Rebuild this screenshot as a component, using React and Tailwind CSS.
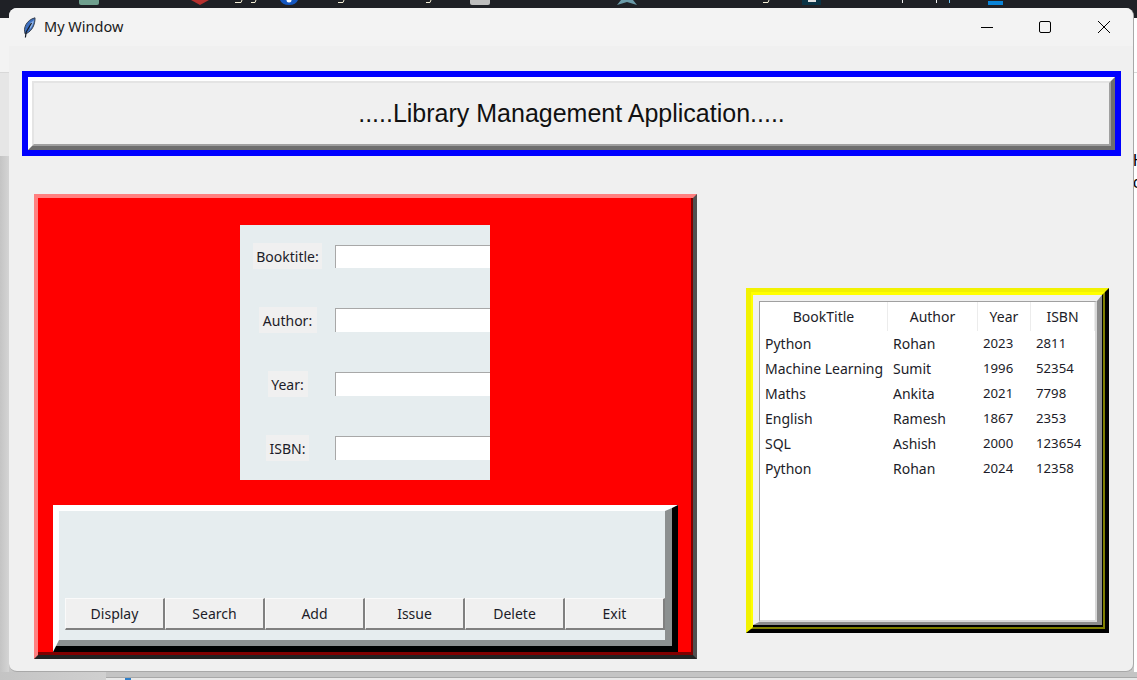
const ui = { fontFamily: '"Noto Sans", sans-serif' };

const FIELDS = [
  { label: 'Booktitle:', w: 'w-[69px]', entry: 'mt-[2px] h-[23px]' },
  { label: 'Author:', w: 'w-[58px]', entry: 'mt-[1px] h-[24px]' },
  { label: 'Year:', w: 'w-[40px]', entry: 'mt-[1px] h-[24px]' },
  { label: 'ISBN:', w: 'w-[43px]', entry: 'mt-[1px] h-[24px]' },
];
const BUTTONS = ['Display', 'Search', 'Add', 'Issue', 'Delete', 'Exit'];
const COLS = [
  { name: 'BookTitle', w: 'w-[128px]', cell: '' },
  { name: 'Author', w: 'w-[90px]', cell: '' },
  { name: 'Year', w: 'w-[53px]', cell: 'text-[13.2px]' },
  { name: 'ISBN', w: 'w-[64px]', cell: 'text-[13.2px]' },
];
const ROWS = [
  ['Python', 'Rohan', '2023', '2811'],
  ['Machine Learning', 'Sumit', '1996', '52354'],
  ['Maths', 'Ankita', '2021', '7798'],
  ['English', 'Ramesh', '1867', '2353'],
  ['SQL', 'Ashish', '2000', '123654'],
  ['Python', 'Rohan', '2024', '12358'],
];

function Feather() {
  return (
    <svg width="14" height="21" viewBox="0 0 14 21" className="shrink-0 ml-[-1px]">
      <path d="M3.2 17 C0.8 11 4.5 3 13 0.8 C13.2 7.5 10 14 4.6 16.4 Z" fill="#3c6fc0" stroke="#39424f" strokeWidth="1" />
      <path d="M8 6 C10 5 11 4 12 3 C11.5 7 10 10 8 12 Z" fill="#8fb4e8" />
      <path d="M3.4 20.5 L4.2 15 L9.5 6" stroke="#141a24" strokeWidth="1.2" fill="none" />
    </svg>
  );
}

function TopStrip() {
  return (
    <svg width="1137" height="8" viewBox="0 0 1137 8" className="block shrink-0">
      <rect width="1137" height="8" fill="#1f2126" />
      <path d="M79 0H99V3Q99 5 97 5H81Q79 5 79 3Z" fill="#6f9f8e" />
      <path d="M191 0H209L200 5Z" fill="#b5302e" />
      <path d="M235 2.5H241L242 0M251 2.5H255L256 0M338 2.5H343L344 0M426 2.5H430L431 0M763 2.5H768L769 0" stroke="#f5f0d8" strokeWidth="1" fill="none" />
      <path d="M280 0H298Q296 5 289 5Q282 5 280 0Z" fill="#1557c0" />
      <circle cx="289" cy="0" r="2.5" fill="#fff" />
      <path d="M470 0H490V3Q490 5 488 5H472Q470 5 470 3Z" fill="#bdbdbd" />
      <path d="M617 5L621 0H633L637 5L627 2Z" fill="#6a9aa8" />
      <rect x="802" y="0" width="19" height="5" fill="#0a3345" />
      <rect x="808" y="0" width="8" height="2" fill="#e0e0e0" />
      <rect x="902" y="0" width="1" height="3" fill="#f0f0f0" />
      <rect x="936" y="0" width="1" height="3" fill="#f0f0f0" />
      <rect x="949" y="0" width="1" height="3" fill="#6fc0f0" />
      <rect x="988" y="1" width="15" height="4" fill="#0a84d8" />
    </svg>
  );
}

export default function App() {
  return (
    <div className="w-[1137px] h-[680px] flex flex-col overflow-hidden bg-[#c8c8c8] text-[#1c1c28] text-[14px]" style={ui}>
      <TopStrip />
      <div className="flex h-[664px] shrink-0 bg-[linear-gradient(#1f2126_0,#1f2126_10px,#c8c8c8_10px)]">
        <div className="w-[9px] shrink-0 flex flex-col">
          <div className="h-[10px] bg-[#1f2126]" />
          <div className="h-[55px] bg-[#f3f3f3] border-b border-[#d8d8d8]" />
          <div className="h-[83px] bg-[#e6e6e6]" />
          <div className="flex-1 bg-[linear-gradient(90deg,#c4c4c4,#d4d4d4)]" />
        </div>
        <div className="w-[1125px] shrink-0 flex flex-col bg-[#f0f0f0] rounded-[8px] overflow-hidden border-r border-b border-[#a8a8a8]">
          <div className="h-[38px] shrink-0 bg-[#f3f3f3] flex items-center pl-[14px]">
            <Feather />
            <span className="ml-[8px] text-[14.5px] text-[#1a1a1a]">My Window</span>
            <div className="ml-auto flex items-center">
              <svg width="12" height="12" viewBox="0 0 12 12" className="mr-[46px]"><path d="M0 6.5H12" stroke="#000" /></svg>
              <svg width="12" height="12" viewBox="0 0 12 12" className="mr-[47px]"><rect x="0.5" y="0.5" width="11" height="11" rx="1.5" fill="none" stroke="#000" /></svg>
              <svg width="12" height="12" viewBox="0 0 12 12" className="mr-[23px]"><path d="M0 0L12 12M12 0L0 12" stroke="#000" strokeWidth="1" /></svg>
            </div>
          </div>

          <div className="mt-[25px] ml-[13px] w-[1099px] h-[85px] shrink-0 border-[6px] border-[#0000ff]">
            <div className="h-full border-[4px] border-t-white border-l-white border-r-[#6e6e6e] border-b-[#6e6e6e]">
              <div className="h-full border-[2px] border-t-[#e4e4e4] border-l-[#e4e4e4] border-r-[#a0a0a0] border-b-[#a0a0a0] flex items-center justify-center bg-[#f0f0f0] text-[25px] text-[#111]" style={{ fontFamily: '"Liberation Sans", sans-serif' }}>
                .....Library Management Application.....
              </div>
            </div>
          </div>

          <div className="flex mt-[38px] ml-[25px] items-start">
            <div className="w-[663px] h-[465px] shrink-0 border-[4px] border-t-[#ff8080] border-l-[#ff8080] border-r-[#505050] border-b-[#222222]">
              <div className="h-full border-r-[2px] border-b-[3px] border-r-[#800000] border-b-[#800000] bg-[#ff0000] flex flex-col">
                <div className="mt-[27px] ml-[202px] w-[250px] h-[255px] shrink-0 bg-[#e6edef] flex flex-col gap-[38px] pt-[18px]">
                  {FIELDS.map((f) => (
                    <div key={f.label} className="flex items-start h-[26px]">
                      <div className="w-[95px] flex justify-center">
                        <span className={`${f.w} h-[26px] bg-[#f0f0f0] flex items-center justify-center whitespace-nowrap`}>{f.label}</span>
                      </div>
                      <div className={`${f.entry} w-[155px] bg-white border-t border-l border-[#a8a8a8]`} />
                    </div>
                  ))}
                </div>
                <div className="mt-[25px] ml-[15px] w-[625px] h-[147px] shrink-0 border-t-[3px] border-l-[3px] border-r-[6px] border-b-[6px] border-t-white border-l-white border-r-black border-b-black">
                  <div className="h-full border-t-[3px] border-l-[3px] border-r-[7px] border-b-[6px] border-t-white border-l-white border-r-[#8c9090] border-b-[#8c9090] bg-[#e6edef] flex items-end pl-[6px] pb-[10px]">
                    {BUTTONS.map((b) => (
                      <div key={b} className="w-[100px] h-[32px] shrink-0 bg-[#f0f0f0] border-t border-l border-r-[2px] border-b-[2px] border-t-[#fafafa] border-l-[#fafafa] border-r-[#808080] border-b-[#808080] flex items-center justify-center">
                        {b}
                      </div>
                    ))}
                  </div>
                </div>
              </div>
            </div>

            <div className="ml-[49px] mt-[94px] w-[363px] h-[345px] shrink-0 border-t-[4px] border-l-[5px] border-r-[4px] border-b-[4px] border-t-[#f2f200] border-l-[#f2f200] border-r-black border-b-black">
              <div className="h-full border-[2px] border-t-[#ffff00] border-l-[#ffff00] border-r-[#808000] border-b-[#808000]">
                <div className="h-full border-t border-r border-b-[2px] border-t-[#ffff00] border-r-black border-b-black">
                  <div className="h-full border-t-[6px] border-l-[6px] border-r-[5px] border-b-[3px] border-t-[#f0f0f0] border-l-[#f0f0f0] border-r-[#8c8c8c] border-b-[#8c8c8c]">
                    <div className="h-full bg-white border-t border-l border-r-[2px] border-b-[2px] border-t-[#a0a0a0] border-l-[#a0a0a0] border-r-[#d8d8d8] border-b-[#d8d8d8]">
                      <div className="flex h-[29px]">
                        {COLS.map((c) => (
                          <div key={c.name} className={`${c.w} shrink-0 border-r border-[#ececec] flex items-center justify-center`}>{c.name}</div>
                        ))}
                      </div>
                      {ROWS.map((r) => (
                        <div key={r[0] + r[3]} className="flex h-[25px] items-center">
                          {r.map((v, i) => (
                            <div key={i} className={`${COLS[i].w} ${COLS[i].cell} shrink-0 pl-[5px] whitespace-nowrap`}>{v}</div>
                          ))}
                        </div>
                      ))}
                    </div>
                  </div>
                </div>
              </div>
            </div>
          </div>
        </div>
        <div className="flex-1 flex flex-col bg-white overflow-hidden">
          <div className="h-[10px] shrink-0 bg-[#1f2126]" />
          <div className="h-[55px] shrink-0 border-b border-[#d8d8d8]" />
          <div className="mt-[77px] leading-[22px] text-[16px] text-black whitespace-nowrap" style={{ fontFamily: '"Liberation Sans", sans-serif' }}>
            <div className="ml-[-1px]">H</div>
            <div className="ml-[-1px]">c</div>
          </div>
        </div>
      </div>
      <div className="flex-1 flex">
        <div className="w-[106px] shrink-0 bg-[linear-gradient(90deg,#c4c4c4,#d0d0d0)]" />
        <div className="flex-1 flex flex-col bg-[#c4c4c4]">
          <div className="h-[5px] shrink-0" />
          <div className="flex-1 bg-[#e8e8e8] border-t border-[#a8a8a8] flex">
            <div className="ml-[19px] w-[6px] bg-[#2f7fc8]" />
          </div>
        </div>
      </div>
    </div>
  );
}
